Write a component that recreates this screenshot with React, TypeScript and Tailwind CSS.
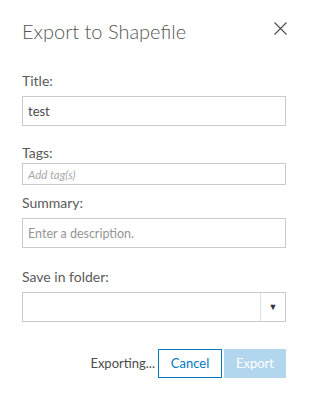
function Field({
  label,
  gap,
  children,
}: {
  label: string;
  gap: string;
  children: React.ReactNode;
}) {
  return (
    <div className="flex flex-col">
      <label className={`text-[14px] leading-[18px] text-[#5a5a5a] ${gap}`}>{label}</label>
      {children}
    </div>
  );
}

export default function App() {
  return (
    <div
      className="w-[310px] h-[400px] bg-white pl-[22px] pr-[24px] pt-[17px]"
      style={{ fontFamily: "Lato, 'Open Sans', sans-serif" }}
    >
      <div className="flex items-start justify-between h-[28px]">
        <h2 className="text-[20px] leading-[28px] text-[#555555] font-light">Export to Shapefile</h2>
        <svg width="13" height="13" viewBox="0 0 13 13" className="mt-[5px] mr-[-1px]">
          <path d="M0.5 0.5 L12.5 12.5 M12.5 0.5 L0.5 12.5" stroke="#4c4c4c" strokeWidth="1.1" fill="none" />
        </svg>
      </div>

      <div className="mt-[27px]">
        <Field label="Title:" gap="mb-[6px]">
          <input
            className="h-[30px] w-full border border-[#cacaca] px-[5px] text-[13px] text-[#4c4c4c] outline-none"
            defaultValue="test"
          />
        </Field>
      </div>

      <div className="mt-[18px]">
        <Field label="Tags:" gap="mb-[1px]">
          <input
            className="h-[22px] w-full border border-[#cacaca] px-[5px] text-[11.5px] italic text-[#4c4c4c] placeholder:text-[#a8a8a8] outline-none"
            placeholder="Add tag(s)"
          />
        </Field>
      </div>

      <div className="mt-[9px]">
        <Field label="Summary:" gap="mb-[6px]">
          <input
            className="h-[30px] w-full border border-[#cacaca] px-[5px] text-[12.5px] text-[#4c4c4c] placeholder:text-[#959595] outline-none"
            placeholder="Enter a description."
          />
        </Field>
      </div>

      <div className="mt-[20px]">
        <Field label="Save in folder:" gap="mb-[6px]">
          <div className="flex h-[30px] w-full border border-[#cacaca]">
            <div className="flex-1" />
            <div className="w-[25px] border-l border-[#e0e0e0] flex items-center justify-center">
              <span className="text-[9px] text-[#333333]">▼</span>
            </div>
          </div>
        </Field>
      </div>

      <div className="mt-[27px] flex items-center justify-end">
        <span className="text-[13px] text-[#4c4c4c] mr-[3px]">Exporting...</span>
        <button className="h-[29px] w-[64px] border border-[#0079c1] text-[#0079c1] text-[13px] bg-white">
          Cancel
        </button>
        <button className="ml-[2px] h-[29px] w-[62px] bg-[#b2d6ed] text-white text-[13px]">Export</button>
      </div>
    </div>
  );
}
